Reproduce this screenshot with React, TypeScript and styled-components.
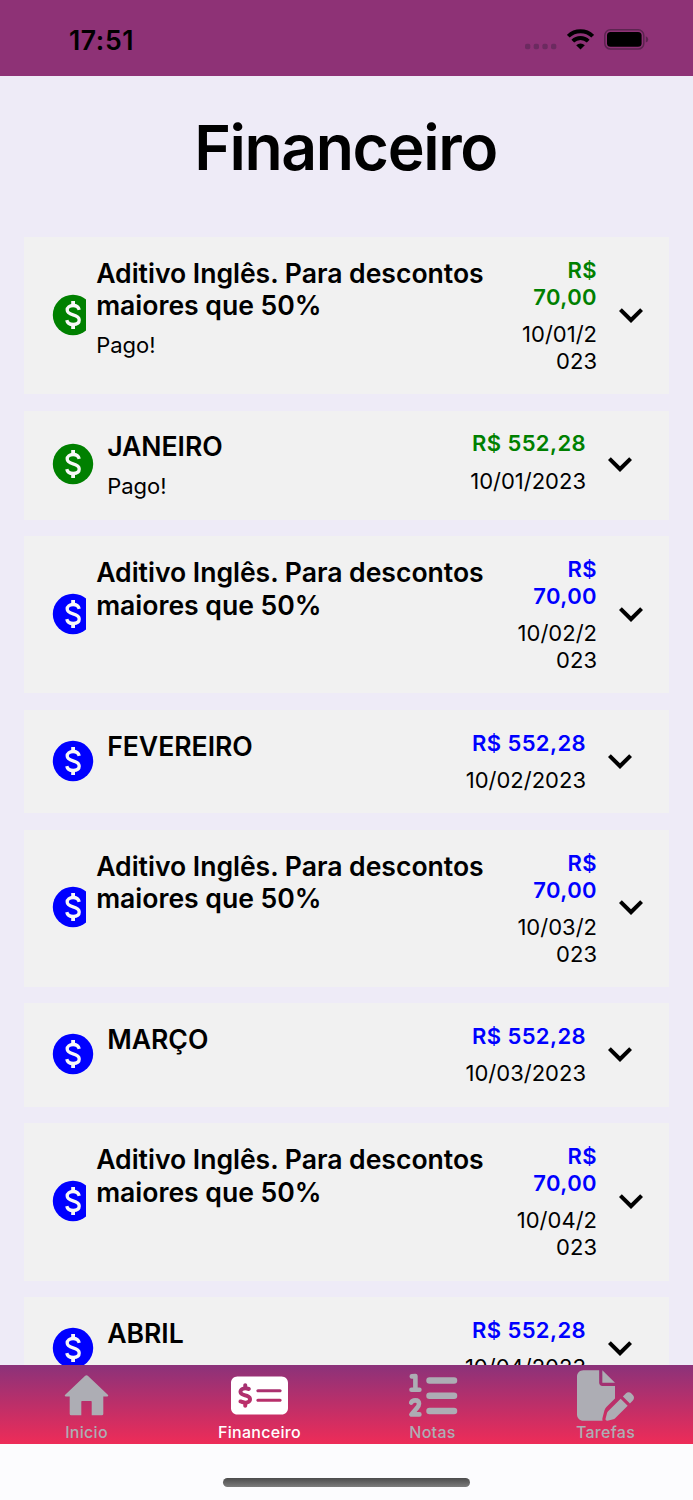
import React from "react";
import styled, { createGlobalStyle } from "styled-components";
import { MdExpandMore } from "react-icons/md";
import { FaMoneyCheckDollar, FaFilePen } from "react-icons/fa6";

const GlobalStyle = createGlobalStyle`
  * { box-sizing: border-box; }
  html, body { margin: 0; padding: 0; }
  body { font-family: Inter, "Liberation Sans", sans-serif; color: #000; background: #eeebf7; }
`;

const Screen = styled.div`
  display: flex;
  flex-direction: column;
  width: 693px;
  height: 1500px;
  overflow: hidden;
  background: #eeebf7;
`;

const StatusBar = styled.header`
  flex: none;
  display: flex;
  justify-content: space-between;
  align-items: center;
  height: 76px;
  padding: 3px 44px 0 69px;
  background: #8e3276;
`;

const Clock = styled.span`
  font-size: 26.6px;
  font-weight: 600;
  line-height: 32px;
  letter-spacing: 0.6px;
`;

const StatusIcons = styled.div`
  display: flex;
  align-items: center;
`;

const Content = styled.main`
  flex: 1;
  min-height: 0;
  overflow: hidden;
`;

const Title = styled.h1`
  margin: 0;
  height: 161px;
  padding: 31px 2px 0 0;
  text-align: center;
  font-size: 62.5px;
  font-weight: 600;
  line-height: 80px;
  letter-spacing: -1.4px;
`;

const List = styled.div`
  display: flex;
  flex-direction: column;
  gap: 16.3px;
  padding: 0 24px;
`;

const Card = styled.article<{ $height: number; $wide: boolean }>`
  flex: none;
  display: flex;
  height: ${(p) => p.$height}px;
  padding: 19.8px ${(p) => (p.$wide ? 14 : 25)}px 0 25px;
  background: #f1f1f1;
`;

const IconSlot = styled.div<{ $width: number; $color?: string }>`
  flex: none;
  align-self: center;
  width: ${(p) => p.$width}px;
  height: 48px;
  margin-top: -22px;
  overflow: hidden;
  color: ${(p) => p.$color ?? "#000"};
  svg { display: block; }
`;

const Details = styled.div`
  flex: 1;
  min-width: 0;
  padding-left: 10.2px;
`;

const Name = styled.div`
  font-size: 26.6px;
  font-weight: 570;
  line-height: 32.6px;
  letter-spacing: -0.03px;
  white-space: pre-line;
`;

const Note = styled.div`
  margin-top: 10px;
  font-size: 22px;
  line-height: 27px;
`;

const Amounts = styled.div`
  flex: none;
  text-align: right;
  white-space: pre-line;
  font-size: 22px;
  line-height: 27px;
  margin-right: 10px;
`;

const Price = styled.div<{ $color: string }>`
  font-weight: 580;
  letter-spacing: 0.4px;
  color: ${(p) => p.$color};
`;

const DueDate = styled.div`
  margin-top: 10.3px;
`;

const TabBar = styled.nav`
  flex: none;
  display: grid;
  grid-template-columns: repeat(4, 1fr);
  height: 79px;
  padding-right: 1px;
  background: linear-gradient(#8b327a, #ee2c58);
`;

const Tab = styled.div<{ $active?: boolean }>`
  display: flex;
  flex-direction: column;
  align-items: center;
  color: ${(p) => (p.$active ? "#fff" : "#adadb4")};
  font-size: 16px;
  font-weight: 480;
  line-height: 20px;
  letter-spacing: 0.3px;
`;

const TabIcon = styled.div`
  display: flex;
  align-items: center;
  height: 60px;
  margin-bottom: -3px;
`;

const HomeArea = styled.footer`
  flex: none;
  display: flex;
  justify-content: center;
  height: 56px;
  padding-top: 34px;
  background: #fcfcfe;
`;

const HomeIndicator = styled.div`
  width: 247px;
  height: 9px;
  border-radius: 5px;
  background: linear-gradient(#4c4c4c, #7c7c7c);
`;

const WifiSvg = styled.svg`
  margin: 0 10px;
`;

const SignalDots = () => (
  <svg width="32" height="24" viewBox="0 0 32 24" fill="#6c2a60">
    {[0, 8.7, 17.4, 26].map((x) => (
      <rect key={x} x={x} y="15.8" width="5.3" height="5.4" rx="1.8" />
    ))}
  </svg>
);

const Wifi = () => (
  <WifiSvg width="27" height="21" viewBox="0 0 27 21">
    <g fill="none" stroke="#000" strokeWidth="3.9">
      <path d="M1.3 7.2A17.4 17.4 0 0 1 25.7 7.2" />
      <path d="M5.8 12.1A11 11 0 0 1 21.2 12.1" />
    </g>
    <path d="M9.2 16.3A6.2 6.2 0 0 1 17.8 16.3L13.5 20.6z" />
  </WifiSvg>
);

const Battery = () => (
  <svg width="45" height="21" viewBox="0 0 45 21">
    <rect x="0.8" y="0.8" width="39" height="19.2" rx="5.6" fill="none" stroke="#5c2450" strokeWidth="1.5" />
    <rect x="3" y="3" width="34.6" height="14.8" rx="3.6" />
    <path d="M41.8 7.2Q44.2 8 44.2 10.4T41.8 13.6z" fill="#5c2450" />
  </svg>
);

const Coin = () => (
  <svg width="48" height="48" viewBox="0 0 48 48">
    <circle cx="24" cy="24" r="20.2" fill="currentColor" />
    <g fill="none" stroke="#f8f8f8" strokeWidth="3.3">
      <path d="M30.2 18.9C29.6 16 27.3 14.5 24.1 14.5C20.6 14.5 18.2 16.3 18.2 19C18.2 22 20.9 23 24.1 23.9C27.5 24.9 30.2 26 30.2 29.1C30.2 32 27.7 33.5 24.2 33.5C20.7 33.5 18.3 32 17.8 29.1" />
      <path d="M24.1 10V15M24.1 33V38" strokeWidth="3.8" />
    </g>
  </svg>
);

const HomeGlyph = () => (
  <svg width="45" height="41" viewBox="0 0 45 41" fill="currentColor">
    <path d="M21.2.8Q22.5-.2 23.8.8L43.8 19.8Q45 21.5 43 21.6H39.3V38.9Q39.3 40.3 37.9 40.3H27.7V26.7Q27.7 26 27 26H18Q17.3 26 17.3 26.7V40.3H7.1Q5.7 40.3 5.7 38.9V21.6H2Q0 21.5 1.2 19.8z" />
  </svg>
);

const NumberedList = () => (
  <svg width="50" height="46" viewBox="0 0 50 46" fill="none" stroke="currentColor" strokeLinecap="round" strokeLinejoin="round">
    <path d="M21.5 8.4H46M21.5 23.8H46M21.5 39.1H46" strokeWidth="6.5" />
    <path d="M3.8 4.4L7.4 4V17.8M3.5 17.8H11.4" strokeWidth="4.6" />
    <path d="M3.2 30.7Q4.2 28.4 7.2 28.4Q11 28.4 11 31.7Q11 34 8.5 36.5L3.4 42.4H11.4" strokeWidth="4.6" />
  </svg>
);

const green = "#008000";
const blue = "#0000ff";

const entries = [
  { extra: true, month: "01", paid: true },
  { name: "JANEIRO", month: "01", paid: true },
  { extra: true, month: "02" },
  { name: "FEVEREIRO", month: "02" },
  { extra: true, month: "03" },
  { name: "MARÇO", month: "03" },
  { extra: true, month: "04" },
  { name: "ABRIL", month: "04" },
];

export default function App() {
  return (
    <Screen>
      <GlobalStyle />
      <StatusBar>
        <Clock>17:51</Clock>
        <StatusIcons>
          <SignalDots />
          <Wifi />
          <Battery />
        </StatusIcons>
      </StatusBar>
      <Content>
        <Title>Financeiro</Title>
        <List>
          {entries.map((e, i) => {
            const color = e.paid ? green : blue;
            const height = e.extra ? 157.3 : e.paid ? 109.3 : 103.7;
            return (
              <Card key={i} $height={height} $wide={!!e.extra}>
                <IconSlot $width={e.extra ? 37 : 48} $color={color}>
                  <Coin />
                </IconSlot>
                <Details>
                  <Name>{e.extra ? "Aditivo Inglês. Para descontos\nmaiores que 50%" : e.name}</Name>
                  {e.paid && <Note>Pago!</Note>}
                </Details>
                <Amounts>
                  <Price $color={color}>{e.extra ? "R$\n70,00" : "R$ 552,28"}</Price>
                  <DueDate>{e.extra ? `10/${e.month}/2\n023` : `10/${e.month}/2023`}</DueDate>
                </Amounts>
                <IconSlot $width={48}>
                  <MdExpandMore size={48} />
                </IconSlot>
              </Card>
            );
          })}
        </List>
      </Content>
      <TabBar>
        <Tab>
          <TabIcon><HomeGlyph /></TabIcon>
          Inicio
        </Tab>
        <Tab $active>
          <TabIcon><FaMoneyCheckDollar size={57} /></TabIcon>
          Financeiro
        </Tab>
        <Tab>
          <TabIcon><NumberedList /></TabIcon>
          Notas
        </Tab>
        <Tab>
          <TabIcon><FaFilePen size={57} /></TabIcon>
          Tarefas
        </Tab>
      </TabBar>
      <HomeArea>
        <HomeIndicator />
      </HomeArea>
    </Screen>
  );
}
